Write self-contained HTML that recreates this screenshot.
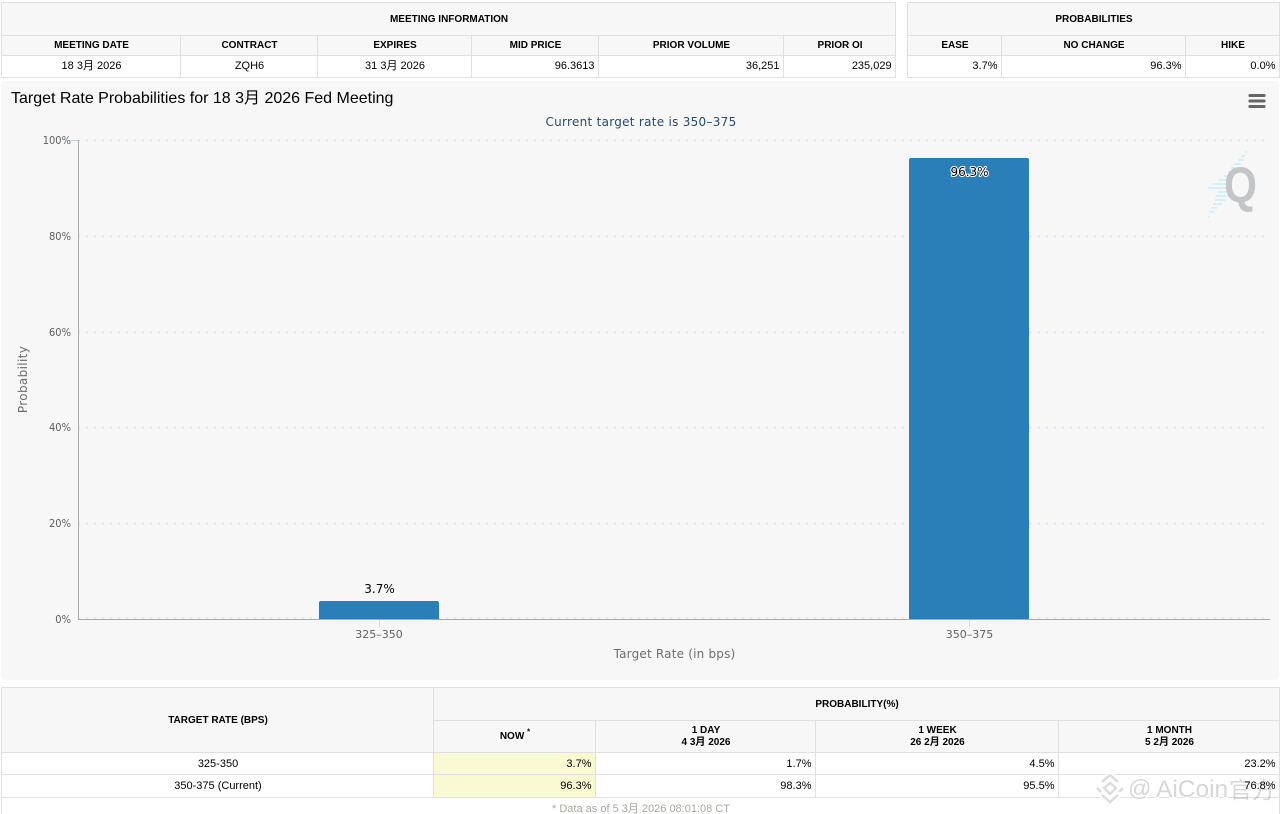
<!DOCTYPE html>
<html><head><meta charset="utf-8"><style>
html,body{margin:0;padding:0;background:#fff;width:1282px;height:814px;overflow:hidden}
body{position:relative;font-family:"Liberation Sans","Noto Sans CJK SC",sans-serif;color:#000}
table{position:absolute;border-collapse:collapse;table-layout:fixed;font-size:11px}
th,td{border:1px solid #e0e0e0;padding:0 3px;overflow:hidden;white-space:nowrap}
th{background:#f7f7f7;font-size:10px;font-weight:bold;text-align:center;line-height:12px;padding:2px 2px 0 4px}
td{background:#fff;text-align:right;line-height:14px}
td.c{text-align:center;padding-left:4px;padding-right:2px}
td.y{background:#fafad2}
td.d{padding-top:1px}
sup{font-size:8px;line-height:0}
svg{position:absolute;left:0;top:0}
</style></head><body>

<table style="left:0.5px;top:1.5px;width:894px">
<colgroup><col style="width:179px"><col style="width:137px"><col style="width:154px"><col style="width:127px"><col style="width:185px"><col style="width:112px"></colgroup>
<tr style="height:33px"><th colspan="6">MEETING INFORMATION</th></tr>
<tr style="height:20px"><th>MEETING DATE</th><th>CONTRACT</th><th>EXPIRES</th><th>MID PRICE</th><th>PRIOR VOLUME</th><th>PRIOR OI</th></tr>
<tr style="height:22px"><td class="c">18 3月 2026</td><td class="c">ZQH6</td><td class="c">31 3月 2026</td><td>96.3613</td><td>36,251</td><td>235,029</td></tr>
</table>

<table style="left:906.5px;top:1.5px;width:372px">
<colgroup><col style="width:94px"><col style="width:184px"><col style="width:94px"></colgroup>
<tr style="height:33px"><th colspan="3">PROBABILITIES</th></tr>
<tr style="height:20px"><th>EASE</th><th>NO CHANGE</th><th>HIKE</th></tr>
<tr style="height:22px"><td>3.7%</td><td>96.3%</td><td>0.0%</td></tr>
</table>

<div style="position:absolute;left:1px;top:81px;width:1278px;height:599px;background:#f7f7f7;border-radius:4px"></div>

<svg width="1282" height="814" viewBox="0 0 1282 814" style="font-family:'DejaVu Sans',sans-serif">
<text x="11" y="103" style="font-family:'Liberation Sans','Noto Sans CJK SC',sans-serif;font-size:16px" fill="#000">Target Rate Probabilities for 18 3月 2026 Fed Meeting</text>
<text x="641" y="126" text-anchor="middle" font-size="12" letter-spacing=".28" fill="#274b6d">Current target rate is 350–375</text>
<g fill="#666"><rect x="1248.5" y="94" width="17" height="3" rx="1"/><rect x="1248.5" y="99.5" width="17" height="3" rx="1"/><rect x="1248.5" y="105" width="17" height="3" rx="1"/></g>

<g stroke="#e2e2e2" stroke-width="1.5" stroke-dasharray="2,6" fill="none">
<path d="M78 140.5H1270M78 236.5H1270M78 332.5H1270M78 427.5H1270M78 523.5H1270M78 618.5H1270"/>
</g>
<g font-size="11" fill="#606060" text-anchor="end" transform="scale(.9 1)">
<text x="78.9" y="144">100%</text><text x="78.9" y="240">80%</text><text x="78.9" y="336">60%</text><text x="78.9" y="431">40%</text><text x="78.9" y="527">20%</text><text x="78.9" y="623">0%</text>
</g>
<g stroke="#c0d0e0" stroke-width="1" fill="none"><path d="M71 140.5H78"/><path d="M379.5 620V627M969.5 620V627" stroke="#d8d8d8"/></g>
<path d="M78.5 140V619" stroke="#aaa" stroke-width="1"/>
<path d="M78 619.5H1270" stroke="#aaa" stroke-width="1"/>

<path d="M319 619V603a2 2 0 0 1 2-2H437a2 2 0 0 1 2 2V619Z" fill="#2a7fb8"/>
<path d="M909 619V160a2 2 0 0 1 2-2H1027a2 2 0 0 1 2 2V619Z" fill="#2a7fb8"/>
<text x="379.5" y="593" text-anchor="middle" font-size="12" fill="#000">3.7%</text>
<text x="969.5" y="176" text-anchor="middle" font-size="12" fill="#000" stroke="#fff" stroke-width="2" paint-order="stroke" stroke-linejoin="round">96.3%</text>

<g font-size="11" fill="#606060" text-anchor="middle"><text x="379" y="638">325–350</text><text x="969.5" y="638">350–375</text></g>
<text x="674.5" y="658" text-anchor="middle" font-size="12" letter-spacing=".2" fill="#6d6d6d">Target Rate (in bps)</text>
<text transform="translate(27 379.5) rotate(-90)" text-anchor="middle" font-size="12" letter-spacing=".35" fill="#6d6d6d">Probability</text>

<g stroke="#c4ecf7" stroke-width="1.3" fill="none">
<path d="M1245 152h2M1241 156h4M1238 160h6M1234 164h7M1231 168h6M1228 172h6M1224 176h7M1218 180h13M1212 184h18M1208 188h22M1218 192h10M1216 196h13M1215 200h11M1213 204h9M1211 208h6M1209 212h5M1208 217h2"/>
</g>
<text x="1224" y="202" style="font-family:'Liberation Sans',sans-serif;font-size:50px;font-weight:bold" fill="#c3c5c8" textLength="33" lengthAdjust="spacingAndGlyphs">Q</text>
</svg>

<table style="left:0.5px;top:686.5px;width:1278px">
<colgroup><col style="width:432px"><col style="width:162px"><col style="width:220px"><col style="width:243px"><col style="width:221px"></colgroup>
<tr style="height:33px"><th rowspan="2">TARGET RATE (BPS)</th><th colspan="4">PROBABILITY(%)</th></tr>
<tr style="height:32px"><th>NOW <sup>*</sup></th><th>1 DAY<br>4 3月 2026</th><th>1 WEEK<br>26 2月 2026</th><th>1 MONTH<br>5 2月 2026</th></tr>
<tr style="height:22px"><td class="c d">325-350</td><td class="y d">3.7%</td><td class="d">1.7%</td><td class="d">4.5%</td><td class="d">23.2%</td></tr>
<tr style="height:23px"><td class="c">350-375 (Current)</td><td class="y">96.3%</td><td>98.3%</td><td>95.5%</td><td>76.8%</td></tr>
<tr style="height:22px"><td colspan="5" class="c" style="font-size:11px;color:#a8a8a0;vertical-align:top;padding-top:4px">* Data as of 5 3月 2026 08:01:08 CT</td></tr>
</table>

<svg width="1282" height="814" viewBox="0 0 1282 814">
<g fill="none" stroke="#fff" stroke-width="7" stroke-linejoin="round" opacity=".8"><path d="M1110 775l14 13-14 14-14-14z"/></g>
<g fill="none" stroke="#dcdcdc" stroke-width="2.4">
<path d="M1102 782l8-7 8 7M1097 788l4 4M1123 788l-4 4M1102 795l8 7 8-7M1104 788l6-5 6 5-6 6z"/>
</g>
<g style="font-family:'Liberation Sans','Noto Sans CJK SC',sans-serif" fill="#d4d4d4" stroke="#fff" stroke-width="2" paint-order="stroke" opacity=".92">
<text x="1128" y="796" font-size="23">@</text>
<text x="1156" y="797" font-size="24.5">AiCoin</text>
</g>
<text x="1229" y="798" font-size="23" fill="#d8d8d8" style="font-family:'Liberation Sans','Noto Sans CJK SC',sans-serif;mix-blend-mode:multiply">官方</text>
</svg>
</body></html>
